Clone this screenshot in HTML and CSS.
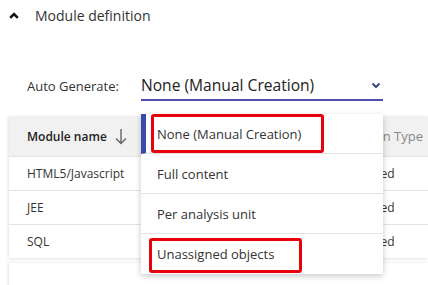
FILE: index.html
```html
<!DOCTYPE html>
<html>
<head>
<meta charset="utf-8">
<link rel="stylesheet" href="styles.css">
</head>
<body>
<div class="section-head">
  <svg class="chev-up" width="10" height="7" viewBox="0 0 10 7"><path d="M1.2 5.8 L5 2 L8.8 5.8" fill="none" stroke="#111" stroke-width="2.6"/></svg>
  <span class="section-title">Module definition</span>
</div>
<div class="form-row">
  <span class="label">Auto Generate:</span>
  <div class="select">
    <span class="select-value">None (Manual Creation)</span>
    <svg class="chev-down" width="10" height="7" viewBox="0 0 10 7"><path d="M1.5 1.5 L5 5 L8.5 1.5" fill="none" stroke="#3b4a7c" stroke-width="2"/></svg>
    <div class="dropdown">
      <div class="item active">None (Manual Creation)<span class="mark mark1"></span></div>
      <div class="item">Full content</div>
      <div class="item">Per analysis unit</div>
      <div class="item">Unassigned objects<span class="mark mark2"></span></div>
    </div>
  </div>
</div>
<div class="card">
  <div class="row head">
    <div class="c1">Module name <svg class="arrow" width="12" height="17" viewBox="0 0 12 17"><path d="M6 1 V15.5 M1 10.5 L6 15.5 L11 10.5" fill="none" stroke="#666" stroke-width="1.4"/></svg></div>
    <div class="c2">Creation Type</div>
  </div>
  <div class="row"><div class="c1">HTML5/Javascript</div><div class="c2">Generated</div></div>
  <div class="row"><div class="c1">JEE</div><div class="c2">Generated</div></div>
  <div class="row last"><div class="c1">SQL</div><div class="c2">Generated</div></div>
</div>
<div class="card2"></div>
</body>
</html>
```
FILE: styles.css
```css
html, body { margin: 0; padding: 0; background: #fff; }
body { font-family: "Open Sans", "Noto Sans", sans-serif; color: #333; width: 428px; height: 285px; overflow: hidden; }

.section-head { display: flex; align-items: center; height: 30px; padding-left: 9px; }
.chev-up { margin-right: 16px; }
.section-title { font-size: 14px; color: #333; }

.form-row { display: flex; align-items: center; margin-top: 41px; padding-left: 27px; }
.label { font-size: 13px; color: #333; width: 114px; }
.select { position: relative; width: 242px; height: 30px; border-bottom: 2px solid #4a4fb0; display: flex; align-items: center; justify-content: space-between; box-sizing: border-box; }
.select-value { font-size: 15.6px; color: #222; }
.chev-down { margin-right: 2px; }

.dropdown { position: absolute; left: 0; top: 43px; width: 242px; background: #fff; box-shadow: 0 2px 6px rgba(0,0,0,0.22); z-index: 5; }
.item { position: relative; height: 40px; box-sizing: border-box; border-bottom: 1px solid #e2e2e2; padding-left: 16px; display: flex; align-items: center; font-size: 13px; color: #333; }
.item:last-child { border-bottom: none; }
.item.active { border-left: 5px solid #3a4aa8; padding-left: 11px; }
.mark { position: absolute; border: 3px solid #e8000d; border-radius: 3px; box-sizing: border-box; }
.mark1 { left: 5px; top: 0; width: 173px; height: 39px; }
.mark2 { left: 8px; top: 4px; width: 153px; height: 35px; }

.card { margin-top: 15px; margin-left: 9px; box-shadow: -1px 1px 3px rgba(0,0,0,0.12); }
.row { display: flex; height: 33px; align-items: center; border-bottom: 1px solid #e4e4e4; font-size: 12px; color: #333; }
.row.last { border-bottom: none; }
.row.head { height: 40px; background: #f1f1f1; font-weight: 600; color: #222; }
.c1 { flex: none; width: 313px; padding-left: 18px; box-sizing: border-box; display: flex; align-items: center; }
.c2 { flex: none; padding-left: 13px; white-space: nowrap; }
.row.head .c2 { font-weight: 400; color: #888; font-size: 13px; padding-left: 17px; }
.row.head .c1 { font-size: 12px; }
.arrow { margin-left: 8px; }
.card2 { margin-top: 5px; margin-left: 9px; height: 30px; box-shadow: -1px 0 3px rgba(0,0,0,0.12); }
```
